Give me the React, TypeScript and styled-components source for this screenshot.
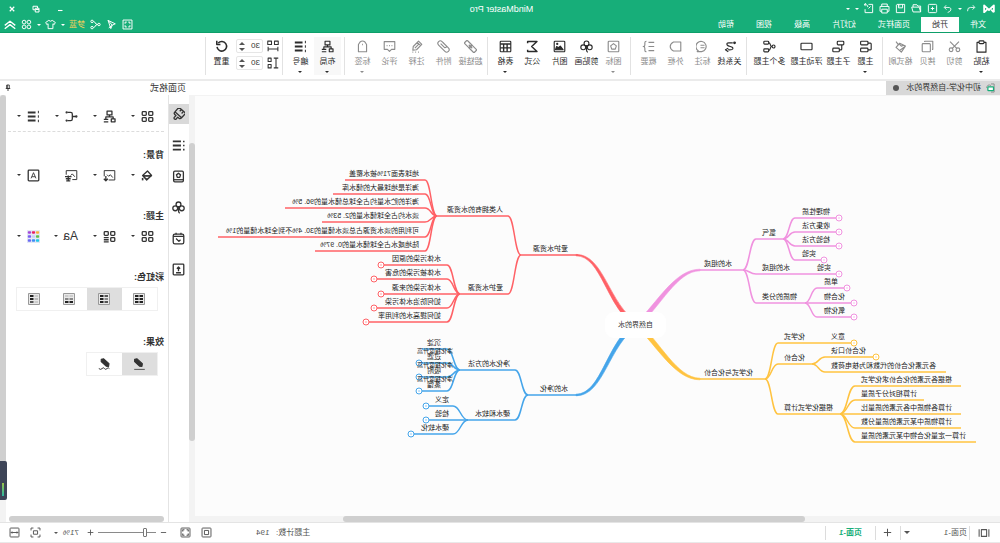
import React from "react";
import styled, { createGlobalStyle } from "styled-components";

const GREEN = "#17ae79";

const Global = createGlobalStyle`
  * { box-sizing: border-box; }
  body { margin: 0; background: #fff; overflow: hidden; }
  body, button, input, select {
    font-family: "Liberation Sans", "Noto Sans CJK SC", sans-serif;
    font-size: 8px;
    line-height: 12px;
    color: #333;
  }
  button, input, select { border: 0; padding: 0; margin: 0; background: none; }
`;

/* ---------- icons ---------- */

const club = (
  <>
    <circle cx="8" cy="4.2" r="3" />
    <circle cx="4" cy="9" r="3" />
    <circle cx="12" cy="9" r="3" />
    <path d="M8 7.5v4.5q0 2-1.5 3.200M8 8l-1-1M8 8l1-1" />
  </>
);
const fourBoxes = (
  <>
    <rect x="1.5" y="2" width="5" height="4.5" rx="1" />
    <rect x="9.5" y="2" width="5" height="4.5" rx="1" />
    <rect x="1.5" y="9.5" width="5" height="4.5" rx="1" />
    <rect x="9.5" y="9.5" width="5" height="4.5" rx="1" />
  </>
);
const numbered = (
  <>
    <path d="M5.500 3h9.500M5.500 8h9.500M5.500 13h9.500" strokeWidth="2.4" />
    <path d="M2 1v3M2 6.500v3M2 12v3" strokeWidth="1.2" />
  </>
);
const tree = (
  <>
    <rect x="5" y="1.5" width="6" height="4.5" />
    <path d="M8 6v2.5M3.5 11V8.5h9V11" />
    <rect x="1.2" y="11" width="4.6" height="3.5" />
    <path d="M9.5 11.5h5.5M9.5 14.5h5.5" />
  </>
);

const ICONS: Record<string, React.ReactNode> = {
  undo: <path d="M5 2 2 5.5 5.5 9M2.5 5.5H9q5 0 4.500 6" />,
  redo: <path d="M11 2l3 3.500L10.500 9M13.500 5.500H8q-5.500 0-4.500 4 1 3 5 4" />,
  add: <><rect x="2" y="2" width="12" height="12" rx="1.500" /><path d="M8 5.500v5M5.500 8h5" /></>,
  open: <path d="M2 13V4.500h4l1.500-2H13v3.500M2 13l2-7h11l-2 7z" />,
  save: <path d="M2 2h11l1 1v11H2zM5 2v5h6V2M9 3.500v1.500" />,
  print: <path d="M4 5V1.500h8V5M4 12H1.500V5h13v7H12M4 9h8v5.500H4z" />,
  share: <path d="M8 2H2v12h11V9M9 6c0-3 2-4 5-4M11.500 0.500 14 2l-1.500 2.500M5 5l3 3" />,
  min: <path d="M3 11h9" strokeWidth="2.200" />,
  restore: <path d="M2 6.500h7.500V14H2zM5 6V2.500h9v7h-4M2 9h7" />,
  close: <path d="M3.500 3.500l9 9M12.500 3.500l-9 9" strokeWidth="2.400" />,
  fit: <><rect x="1.500" y="1.500" width="13" height="13" /><path d="M4.500 7V4.500H7M9 4.500h2.500V7M11.500 9v2.500H9M7 11.500H4.500V9" /></>,
  send: <path d="M13 2 2.500 7 7 9l2 5zM13 2 7 9l5 4" />,
  nodes: <><circle cx="3" cy="8" r="1.800" /><circle cx="13" cy="3.500" r="1.800" /><circle cx="13" cy="12.500" r="1.800" /><path d="M5 8c4 0 3-4.500 6-4.500M5 8c4 0 3 4.500 6 4.500" /></>,
  shirt: <path d="M5.500 2 1 5l1.500 3L4.500 7v7h7V7l2 1L15 5l-4.500-3q-2.500 2.500-5 0z" />,
  apps: <><circle cx="4.500" cy="4.500" r="2.700" /><circle cx="11.500" cy="4.500" r="2.700" /><circle cx="4.500" cy="11.500" r="2.700" /><circle cx="11.500" cy="11.500" r="2.700" /></>,
  up: <path d="M1 8.500 8 3l7 5.500M1 13l7-5.500 7 5.500" />,
  paste: <><path d="M5 3H2.500v12h11V3H11" /><rect x="5" y="1" width="6" height="3.500" rx="1" /></>,
  cut: <><circle cx="3.800" cy="12" r="2.300" /><circle cx="12.200" cy="12" r="2.300" /><path d="M5 10.500 13.500 2M11 10.500 2.500 2" /></>,
  copy: <><rect x="4.500" y="4.500" width="10" height="10" rx="1" /><path d="M2.500 11.500h-1v-10h10v1" /></>,
  painter: <path d="M2 7.500 9 4l4.500 5L7 15zM10.500 6l3-4M2 7.500l7 5.500M4 6.500l3 1 3-3" />,
  topic: <><rect x="5" y="1.500" width="9" height="4.500" rx="1" /><rect x="5" y="10" width="9" height="4.500" rx="1" /><path d="M5 12.200H2q-1 0-1-1V5q0-1.200 1-1.200h3" /></>,
  subtopic: <><rect x="1.500" y="1.500" width="8" height="4.500" rx="1" /><rect x="7" y="10" width="8" height="4.500" rx="1" /><path d="M4 6v5q0 1.200 1 1.200h2" /></>,
  floating: <rect x="1.200" y="4" width="13.600" height="8" rx="1" />,
  multi: <><circle cx="3" cy="8" r="1.800" /><rect x="9" y="1.500" width="6" height="3.600" rx="1" /><rect x="9" y="11" width="6" height="3.600" rx="1" /><path d="M5 8c3 0 1-4.500 4-4.500M5 8c3 0 1 4.700 4 4.700" /></>,
  relation: <><path d="M4 3.500h5q3 0 2 2.500-1 1.500-4 2-4 1-3 3 .5 1.500 6 1" /><circle cx="1.800" cy="3.500" r="1" fill="currentColor" /><path d="M9.500 10l3.500 2-3.500 2.500" /></>,
  callout: <><path d="M13 13.500A6.300 6.300 0 1 0 9 14.300h5.500z" /><path d="M5.500 6.500h5M5.500 9.500h5" /></>,
  boundary: <path d="M1.500 2.500h9q4 2 4 5.500t-4 5.500h-9z" />,
  summary: <path d="M1 3h7M1 8h7M1 13h7M10.500 1.500q2 0 2 2v2.500q0 2 2 2-2 0-2 2v2.500q0 2-2 2" />,
  mark: <><rect x="1.500" y="1.500" width="13" height="13" rx="1" /><path d="M8 4.500l3.500 2.700-1.300 4H5.800l-1.300-4z" /></>,
  club,
  image: <><rect x="1.500" y="1.500" width="13" height="13" rx="1" /><path d="M3.500 12 7 7.500l2.500 2 2-1.500 1.500 4z" fill="currentColor" /><circle cx="10.800" cy="4.800" r=".7" /></>,
  sigma: <path d="M14 4V1.800H2.500L9 8l-6.500 6.200H14V12" strokeWidth="1.800" />,
  table: <><rect x="1.500" y="1.500" width="13" height="13" rx="1" /><path d="M1.500 5h13M1.500 9.700h13M6 5v9.500M10.300 5v9.500" strokeWidth="1.700" /></>,
  link: <g transform="rotate(-45 8 8)"><rect x="-.5" y="5.500" width="9" height="5" rx="1" /><rect x="7.500" y="5.500" width="9" height="5" rx="1" /><path d="M5 8h6" /></g>,
  clip: <g transform="rotate(-45 8 8)"><path d="M12 5H2.500a3 3 0 0 0 0 6h11a2.600 2.600 0 0 0 0-6H6q-2 1.500 0 3h7" /></g>,
  note: <path d="M4 8 10.500 1.500l4 4L8 12l-4.500.5zM9 3l4 4M3 15h1M6.500 15h1M10 15h1M6 10l4.500-4.500" transform="translate(16 0) scale(-1 1)" />,
  comment: <><path d="M1.500 2h13v9.500h-4L8 14l-2.500-2.500h-4z" /><path d="M4.500 7h1M7.500 7h1M10.500 7h1" /></>,
  tag: <><path d="M3 5.500 5 2.500q3-2.500 6 0l2 3v9H3z" /><path d="M7.500 5.500h1" strokeWidth="2" /></>,
  tree,
  numbered,
  hgap: <><rect x="1" y="1.500" width="5" height="4.500" /><rect x="10" y="1.500" width="5" height="4.500" /><path d="M1.500 9v6M14.500 9v6M1.500 12h13" /></>,
  vgap: <><rect x="10.500" y="1.500" width="4" height="4.500" /><rect x="10.500" y="10" width="4" height="4.500" /><path d="M1 1.500h6M1 14.500h6M4 1.500v13" /></>,
  reset: <path d="M13.500 8.500A5.900 5.900 0 1 1 12 3.800M13.800 1v4.500H9.300" strokeWidth="1.900" />,
  brush: <g transform="rotate(-42 8 8)"><path d="M2.500 1h11v7.500h-11zM2.500 8.500q0 2.500 2 2.500h2v3.500q1.500 2 3 0V11h2q2 0 2-2.500M6 1v3.500M9.500 1v3" /></g>,
  outline: <><path d="M5 3h10M5 8h10M5 13h10" strokeWidth="2.200" /><path d="M1.500 2v2M1.500 7v2M1.500 12v2" strokeWidth="1.800" /></>,
  book: <><rect x="2" y="1.500" width="12" height="13" rx="1.500" /><path d="M2 12h12" /><path d="M8 4l2.500 2-1 3h-3l-1-3z" /></>,
  calendar: <><rect x="1.500" y="2.500" width="13" height="12" rx="2" /><path d="M1.500 5.500h13M5 1v2M11 1v2M5.500 9.500 7.500 11.500l3.500-3.500" /></>,
  upload: <><rect x="1.500" y="1.500" width="13" height="13" rx="1" /><path d="M8 10V5.500M6 7l2-2 2 2M5 12h6" /></>,
  four: fourBoxes,
  bracket: <><path d="M2 8h5M13 3H9Q7 3 7 5v6q0 2 2 2h4" /><circle cx="2" cy="8" r=".6" /><circle cx="14" cy="3" r=".6" /><circle cx="14" cy="13" r=".6" /></>,
  fill: <><path d="M8 2.500 14 8l-5 5.500L3 8zM3.500 8.500h10L9 13z" /><path d="M3.500 8.500h10" /><path d="M14 11v3" strokeWidth="2" /></>,
  imgdown: <><path d="M9 13.500H1.500V2h13v7" strokeWidth="1.200" /><path d="M4 10.500 7 7l2 2 2-2" strokeWidth="1.200" /><path d="M12.500 8.500v6M10 12l2.500 2.500L15 12" /></>,
  imgdel: <><path d="M7 13H1.500V2h13v5" strokeWidth="1.200" /><path d="M4 9.500 7 6l2 2" strokeWidth="1.200" /><path d="M8 9.500h8M9 12h6M9.500 14.500h5M12 8v6" /></>,
  letter: <><rect x="1.500" y="1.500" width="13" height="13" rx="1" /><path d="M5 11.500 8 4.500l3 7M6 9.500h4" strokeWidth="1.100" /></>,
  mixed: <><rect x="1.500" y="2" width="5" height="4.500" rx="1" /><rect x="9.500" y="2" width="5" height="4.500" rx="1" /><rect x="1.500" y="9.500" width="5" height="4.500" rx="1" /><path d="M9 9.500h6M9 12h6M9 14.500h6" /></>,
  palette: (
    <g stroke="none">
      <rect width="16" height="16" fill="#e4e9f5" />
      {["#fbb03b", "#e91e63", "#a445d8", "#5fc04a", "#c6d0f5", "#7a5cf0", "#22c6e8", "#3f8cf5", "#6a6af4"].map((c, i) => (
        <rect key={c} x={1 + (i % 3) * 5} y={1.5 + Math.floor(i / 3) * 5} width="4" height="3" rx="1" fill={c} />
      ))}
    </g>
  ),
  pen: <><path d="M3 1.500 6 1l6.500 6-.5 3.500-3-.5L3 4.500z" fill="currentColor" transform="translate(17 0) scale(-1 1)" /><path d="M1.500 14h13" strokeWidth="1" /></>,
  sketch: <><path d="M3 1.500 6 1l6.500 6-.5 3.500-3-.5L3 4.500z" fill="currentColor" transform="translate(15 0) scale(-1 1)" /><path d="M2 13q1.500-2 3 0t3 0 3 0 4 0" strokeWidth="1.200" /></>,
  frame: <path d="M4.500 3.500h7v9h-7zM1.500 3v10M14.500 3v10" />,
  plus: <path d="M8 1.500v13M1.500 8h13" />,
  minus: <path d="M2 8h12" />,
  fitpage: <><rect x="1.500" y="1.500" width="13" height="13" rx="1" /><path d="M5 5h6v6H5z" /></>,
  full: <><rect x="1.500" y="1.500" width="13" height="13" rx="1" /><path d="M4 6.500V4h2.500M9.500 4H12v2.500M12 9.500V12H9.500M6.500 12H4V9.500" strokeWidth="1.700" /></>,
  focus: <path d="M1.500 5V1.500H5M11 1.500h3.500V5M14.500 11v3.500H11M5 14.500H1.500V11M5 5.500h6v5H5z" />,
  width: <><rect x="1.500" y="1.500" width="13" height="13" rx="1" /><path d="M3 8h10M4.500 6.500 3 8l1.500 1.500M11.500 6.500 13 8l-1.500 1.500" /></>,
  pin: <path d="M5.500 2h5v7h-5zM3.500 9h9M8 9v5M9.500 2v7" />,
};

const Svg = styled.svg`
  display: block;
  flex: none;
  fill: none;
  stroke: currentColor;
  stroke-linejoin: round;
`;

function Icon({ name, size = 13, weight = 1.4 }: { name: string; size?: number; weight?: number }) {
  return (
    <Svg viewBox="0 0 16 16" width={size} height={size} strokeWidth={weight} aria-hidden="true">
      {ICONS[name]}
    </Svg>
  );
}

const Logo = styled.svg`
  display: block;
  fill: none;
  stroke: #fff;
  stroke-width: 2.4;
  stroke-linejoin: round;
`;

const Caret = styled.span<{ $up?: boolean; $size?: number }>`
  display: block;
  flex: none;
  width: 0;
  height: 0;
  border: ${(p) => p.$size ?? 2}px solid transparent;
  border-top: ${(p) => (p.$up ? "0" : `${p.$size ?? 2}px solid currentColor`)};
  border-bottom: ${(p) => (p.$up ? `${p.$size ?? 2}px solid currentColor` : "0")};
`;

/* ---------- page frame ---------- */

/* The whole window is shown in mirror orientation. */
const Page = styled.div`
  display: flex;
  flex-direction: column;
  min-height: 100vh;
  transform: scaleX(-1);
  background: #fff;
`;

const Header = styled.header`
  color: #fff;
  background: ${GREEN};
  border-bottom: 1px solid #0d9f69;
`;

const TitleRow = styled.div`
  display: grid;
  grid-template-columns: 1fr auto 1fr;
  align-items: center;
  height: 17px;
  padding: 0 8px 0 5px;
`;

const AppTitle = styled.h1`
  margin: 0;
  font-size: 9px;
  line-height: 12px;
  font-weight: 400;
`;

const Tools = styled.div<{ $gap: number; $end?: boolean }>`
  display: flex;
  align-items: center;
  gap: ${(p) => p.$gap}px;
  justify-content: ${(p) => (p.$end ? "flex-end" : "flex-start")};
`;

const IconButton = styled.button`
  display: flex;
  align-items: center;
  justify-content: center;
  gap: 4px;
  color: inherit;
`;

const MenuRow = styled.div`
  display: flex;
  justify-content: space-between;
  align-items: stretch;
  height: 15px;
  padding: 0 4px 0 3px;
`;

const MenuTabs = styled.nav`
  display: flex;
`;

const MenuTab = styled.button<{ $active?: boolean }>`
  height: 15px;
  padding: 0 11px;
  color: ${(p) => (p.$active ? "#333" : "#fff")};
  background: ${(p) => (p.$active ? "#fff" : "transparent")};
`;

const UserName = styled.span`
  color: #f3cf5b;
`;

/* ---------- ribbon ---------- */

const Ribbon = styled.div`
  display: flex;
  height: 48px;
  padding: 4px 0 4px 2px;
  border-bottom: 2px solid #ebebeb;
`;

const Group = styled.div`
  display: flex;
  padding: 0 4px 0 3px;
  border-right: 1px solid #e2e2e2;
`;

const RibbonItem = styled.button<{ $wide?: boolean; $dim?: boolean; $active?: boolean }>`
  display: flex;
  flex-direction: column;
  align-items: center;
  gap: 4px;
  width: ${(p) => (p.$wide ? 37 : 27)}px;
  padding-top: 3px;
  white-space: nowrap;
  color: ${(p) => (p.$dim ? "#8c8c8c" : "#2b2b2b")};
  background: ${(p) => (p.$active ? "#f8f8f8" : "transparent")};
`;

const ItemLabel = styled.span`
  line-height: 10px;
`;

const Stepper = styled.label`
  display: flex;
  align-items: center;
  gap: 4px;
`;

const StepBox = styled.span`
  display: flex;
  align-items: center;
  justify-content: space-between;
  width: 27px;
  height: 14px;
  padding: 0 2px;
  border: 1px solid #e6e6e6;
  border-radius: 2px;
`;

const StepInput = styled.input`
  width: 14px;
  font-size: 8px;
`;

const StepArrows = styled.span`
  display: flex;
  flex-direction: column;
  gap: 3px;
  color: #555;
`;

type Item = { icon: string; label: string; dim?: boolean; wide?: boolean; menu?: boolean; active?: boolean };

const RIBBON: Item[][] = [
  [
    { icon: "paste", label: "粘贴", menu: true },
    { icon: "cut", label: "剪切", dim: true },
    { icon: "copy", label: "拷贝", dim: true },
    { icon: "painter", label: "格式刷", dim: true },
  ],
  [
    { icon: "topic", label: "主题", menu: true },
    { icon: "subtopic", label: "子主题" },
    { icon: "floating", label: "浮动主题", wide: true },
    { icon: "multi", label: "多个主题", wide: true },
  ],
  [
    { icon: "relation", label: "关系线" },
    { icon: "callout", label: "标注", dim: true },
    { icon: "boundary", label: "外框", dim: true },
    { icon: "summary", label: "概要", dim: true },
  ],
  [
    { icon: "mark", label: "图标", dim: true, menu: true },
    { icon: "club", label: "剪贴画" },
    { icon: "image", label: "图片" },
    { icon: "sigma", label: "公式" },
    { icon: "table", label: "表格", menu: true },
  ],
  [
    { icon: "link", label: "超链接", dim: true },
    { icon: "clip", label: "附件", dim: true },
    { icon: "note", label: "注释", dim: true },
    { icon: "comment", label: "评论", dim: true },
    { icon: "tag", label: "标签", dim: true, menu: true },
  ],
  [
    { icon: "tree", label: "布局", menu: true, active: true },
    { icon: "numbered", label: "编号", menu: true },
  ],
];

function RibbonButton({ item }: { item: Item }) {
  return (
    <RibbonItem $wide={item.wide} $dim={item.dim} $active={item.active}>
      <Icon name={item.icon} />
      <ItemLabel>{item.label}</ItemLabel>
      {item.menu && <Caret />}
    </RibbonItem>
  );
}

function SpacingField({ icon, label }: { icon: string; label: string }) {
  return (
    <Stepper>
      <Icon name={icon} size={12} />
      <StepBox>
        <StepInput defaultValue="30" aria-label={label} />
        <StepArrows>
          <Caret $up $size={3} />
          <Caret $size={3} />
        </StepArrows>
      </StepBox>
    </Stepper>
  );
}

const SpacingGroup = styled(Group)`
  padding: 0 2px 0 3px;
`;

const SpacingColumn = styled.div`
  display: flex;
  flex-direction: column;
  gap: 3px;
  padding: 2px 1px 0 0;
`;

/* ---------- workspace ---------- */

const Workspace = styled.main`
  flex: 1;
  display: flex;
  min-height: 0;
`;

const Editor = styled.section`
  flex: 1;
  display: flex;
  flex-direction: column;
  min-width: 0;
`;

const DocTabs = styled.div`
  display: flex;
  height: 14px;
`;

const DocTab = styled.button`
  display: flex;
  align-items: center;
  gap: 5px;
  padding: 0 7px 0 4px;
  background: #d8d8d8;
`;

const Dot = styled.span`
  width: 6px;
  height: 6px;
  margin-left: 2px;
  border-radius: 50%;
  background: #555;
`;

const CanvasRow = styled.div`
  flex: 1;
  display: flex;
`;

const Canvas = styled.div`
  flex: 1;
  position: relative;
  overflow: hidden;
  min-height: 420px;
  background: #fcfcfc;
  border-top: 1px solid #f3f3f3;
`;

const VTrack = styled.div<{ $top: number }>`
  flex: none;
  width: 6px;
  padding-top: ${(p) => p.$top}px;
  background: #f3f3f3;
`;

const VThumb = styled.div<{ $share: number }>`
  height: ${(p) => p.$share}%;
  border-radius: 3px;
  background: #cfcfcf;
`;

const HTrack = styled.div`
  height: 6px;
  padding: 0 19% 0 24%;
  background: #f3f3f3;
`;

const HThumb = styled.div`
  height: 6px;
  border-radius: 3px;
  background: #cfcfcf;
`;

/* ---------- mind map ---------- */

type Leaf = { text: string; y: number; end: number; badge?: boolean; over?: string };
type Branch = { text: string; y: number; start: number; end: number; textX: number; leafStart: number; leafText: number; leaves: Leaf[]; badge?: boolean; extra?: string; extraX?: number };
type Limb = { text: string; color: string; y: number; start: number; end: number; textX: number; trunk: string; left?: boolean; branches: Branch[] };

const LIMBS: Limb[] = [
  {
    text: "爱护水资源", color: "#ff6166", y: 159, start: 422, end: 479, textX: 432,
    trunk: "M363 226C391 209 396 158 424 158.400L424 159.800C398 160 394 212 363 232z",
    branches: [
      {
        text: "人类拥有的水资源", y: 120, start: 492, end: 563, textX: 497, leafStart: 575, leafText: 581,
        leaves: [
          { text: "地球表面71%被水覆盖", y: 84, end: 655 },
          { text: "海洋是地球最大的储水库", y: 98, end: 667 },
          { text: "海洋的贮水量约占全球总储水量的96. 5%", y: 112, end: 715 },
          { text: "淡水约占全球储水量的2. 53%", y: 126, end: 678 },
          { text: "可利用的淡水资源占总淡水储量的30. 4%不到全球水储量的1%", y: 141, end: 782 },
          { text: "陆地咸水占全球储水量的0. 97%", y: 155, end: 685 },
        ],
      },
      {
        text: "爱护水资源", y: 198, start: 492, end: 540, textX: 497, leafStart: 553, leafText: 559,
        leaves: [
          { text: "水体污染的原因", y: 169, end: 619, badge: true },
          { text: "水体被污染的危害", y: 183, end: 626, badge: true },
          { text: "水体污染的来源", y: 198, end: 619, badge: true },
          { text: "如何防治水体污染", y: 212, end: 626, badge: true },
          { text: "如何提高水的利用率", y: 226, end: 634, badge: true },
        ],
      },
    ],
  },
  {
    text: "水的净化", color: "#45a5ea", y: 299, start: 422, end: 472, textX: 432,
    trunk: "M363 231C391 248 396 300 424 299.800L424 298.200C398 298 394 245 363 225z",
    branches: [
      {
        text: "净化水的方法", y: 274, start: 485, end: 540, textX: 490, leafStart: 553, leafText: 559,
        leaves: [
          { text: "沉淀", y: 253, end: 578, over: "净化程度升高" },
          { text: "过滤", y: 267, end: 581, badge: true, over: "净化程度升高" },
          { text: "吸附", y: 281, end: 581, badge: true, over: "净化程度升高" },
          { text: "蒸馏", y: 295, end: 581, badge: true },
        ],
      },
      {
        text: "硬水和软水", y: 324, start: 485, end: 532, textX: 490, leafStart: 547, leafText: 551,
        leaves: [
          { text: "定义", y: 310, end: 574, badge: true },
          { text: "检验", y: 324, end: 574, badge: true },
          { text: "硬水软化", y: 338, end: 589, badge: true },
        ],
      },
    ],
  },
  {
    text: "水的组成", color: "#f092df", y: 174, start: 300, end: 257, textX: 296, left: true,
    trunk: "M363 226C343 207 325 173 300 173.200L300 174.800C323 175 339 210 363 232z",
    branches: [
      {
        text: "氢气", y: 143, start: 244, end: 217, textX: 238, leafStart: 205, leafText: 198,
        leaves: [
          { text: "物理性质", y: 122, end: 161, badge: true },
          { text: "收集方法", y: 136, end: 161, badge: true },
          { text: "检验方法", y: 150, end: 161, badge: true },
          { text: "实验", y: 164, end: 176, badge: true },
        ],
      },
      { text: "水的组成", y: 178, start: 244, end: 161, textX: 238, leafStart: 0, leafText: 0, leaves: [], badge: true, extra: "实验", extraX: 183 },
      {
        text: "物质的分类", y: 207, start: 244, end: 195, textX: 238, leafStart: 183, leafText: 176,
        leaves: [
          { text: "单质", y: 192, end: 153, badge: true },
          { text: "化合物", y: 207, end: 146, badge: true },
          { text: "氧化物", y: 221, end: 146, badge: true },
        ],
      },
    ],
  },
  {
    text: "化学式与化合价", color: "#ffc340", y: 283, start: 300, end: 235, textX: 296, left: true,
    trunk: "M363 231C343 250 325 284 300 283.800L300 282.200C323 282 339 247 363 225z",
    branches: [
      { text: "化学式", y: 247, start: 222, end: 146, textX: 216, leafStart: 0, leafText: 0, leaves: [], badge: true, extra: "意义", extraX: 169 },
      {
        text: "化合价", y: 268, start: 222, end: 188, textX: 216, leafStart: 175, leafText: 169,
        leaves: [
          { text: "化合价口诀", y: 261, end: 124, badge: true },
          { text: "各元素化合价的代数和为核电荷数", y: 276, end: 54 },
        ],
      },
      {
        text: "根据化学式计算", y: 318, start: 222, end: 160, textX: 216, leafStart: 145, leafText: 139,
        leaves: [
          { text: "根据各元素的化合价求化学式", y: 290, end: 39 },
          { text: "计算相对分子质量", y: 304, end: 76 },
          { text: "计算各物质中各元素的质量比", y: 318, end: 39 },
          { text: "计算物质中某元素的质量分数", y: 332, end: 39 },
          { text: "计算一定量化合物中某元素的质量", y: 346, end: 24 },
        ],
      },
    ],
  },
];

const STAGE_WIDTH = 800;

const Stage = styled.div`
  position: absolute;
  top: 0;
  left: 0;
  width: ${STAGE_WIDTH}px;
`;

const Lines = styled.svg`
  display: block;
  fill: none;
  stroke-width: 1.5;
  overflow: visible;
`;

const Topic = styled.span<{ $x: number; $y: number; $left?: boolean; $small?: boolean }>`
  position: absolute;
  top: ${(p) => p.$y - 11}px;
  ${(p) => (p.$left ? `right: ${STAGE_WIDTH - p.$x}px;` : `left: ${p.$x}px;`)}
  font-size: ${(p) => (p.$small ? 6 : 7)}px;
  line-height: 10px;
  white-space: nowrap;
  color: #222;
`;

const Root = styled.div`
  position: absolute;
  left: 334px;
  top: 216px;
  width: 61px;
  height: 26px;
  border-radius: 9px;
  background: #fff;
  font-size: 7px;
  line-height: 26px;
  text-align: center;
`;

const bend = (x1: number, y1: number, x2: number, y2: number, x3: number) => {
  const m = (x1 + x2) / 2;
  return `M${x1} ${y1}C${m} ${y1} ${m} ${y2} ${x2} ${y2}H${x3}`;
};

function Stroke({ fromX, fromY, startX, y, end, badge, left }: { fromX: number; fromY: number; startX: number; y: number; end: number; badge?: boolean; left?: boolean }) {
  const stop = badge ? end + (left ? 3 : -3) : end;
  return (
    <>
      <path d={bend(fromX, fromY, startX, y, stop)} />
      {badge && (
        <g strokeWidth="1">
          <circle cx={end} cy={y} r="3" fill="#fff" />
          <path d={`M${end} ${y - 1}v2`} opacity=".6" />
        </g>
      )}
    </>
  );
}

function MindMap() {
  return (
    <Stage>
      <Lines width={STAGE_WIDTH} height={410}>
        {LIMBS.map((l) => (
          <g key={l.text} stroke={l.color}>
            <path d={l.trunk} fill={l.color} strokeWidth=".6" />
            <path d={`M${l.start} ${l.y}H${l.end}`} />
            {l.branches.map((b) => (
              <g key={b.text}>
                <Stroke fromX={l.end} fromY={l.y} startX={b.start} y={b.y} end={b.end} badge={b.badge} left={l.left} />
                {b.leaves.map((f) => (
                  <Stroke key={f.text} fromX={b.end} fromY={b.y} startX={b.leafStart} y={f.y} end={f.end} badge={f.badge} left={l.left} />
                ))}
              </g>
            ))}
          </g>
        ))}
      </Lines>
      {LIMBS.map((l) => (
        <React.Fragment key={l.text}>
          <Topic $x={l.textX} $y={l.y} $left={l.left}>{l.text}</Topic>
          {l.branches.map((b) => (
            <React.Fragment key={b.text}>
              <Topic $x={b.textX} $y={b.y} $left={l.left}>{b.text}</Topic>
              {b.extra && <Topic $x={b.extraX ?? 0} $y={b.y} $left={l.left}>{b.extra}</Topic>}
              {b.leaves.map((f) => (
                <React.Fragment key={f.text}>
                  <Topic $x={b.leafText} $y={f.y} $left={l.left}>{f.text}</Topic>
                  {f.over && <Topic $small $x={547} $y={f.y + 8}>{f.over}</Topic>}
                </React.Fragment>
              ))}
            </React.Fragment>
          ))}
        </React.Fragment>
      ))}
      <Root>自然界的水</Root>
    </Stage>
  );
}

/* ---------- side panel ---------- */

const Side = styled.aside`
  display: flex;
  flex-direction: column;
  width: 189px;
  flex: none;
`;

const SideTitle = styled.h2`
  display: flex;
  justify-content: space-between;
  align-items: center;
  height: 14px;
  margin: 0;
  padding: 0 4px 0 3px;
  font-size: 9px;
  line-height: 12px;
  font-weight: 400;
`;

const SideBody = styled.div`
  position: relative;
  flex: 1;
  display: flex;
`;

const Strip = styled.div`
  display: flex;
  flex-direction: column;
  gap: 11px;
  width: 21px;
  padding: 9px 1px 0 0;
  border-right: 1px solid #e4e4e4;
`;

const StripButton = styled.button<{ $active?: boolean }>`
  display: flex;
  align-items: center;
  justify-content: center;
  width: 20px;
  height: 20px;
  background: ${(p) => (p.$active ? "#d9d9d9" : "transparent")};
`;

const PanelColumn = styled.div`
  flex: 1;
  min-width: 0;
  display: flex;
  flex-direction: column;
  justify-content: space-between;
`;

const Panel = styled.div`
  padding: 11px 0 0 3px;
`;

const ChoiceRow = styled.div`
  display: grid;
  grid-template-columns: repeat(3, 38px) 1fr;
  height: 20px;
  padding-left: 11px;
`;

const Choice = styled.button`
  display: flex;
  align-items: center;
  gap: 6px;
`;

const FontGlyph = styled.span`
  width: 14px;
  font-size: 12px;
  line-height: 16px;
`;

const Divider = styled.hr`
  margin: 5px 2px 0 1px;
  border: 0;
  border-top: 1px dashed #dcdcdc;
`;

const SectionTitle = styled.h3<{ $tight?: boolean }>`
  margin: ${(p) => (p.$tight ? "17px 0 4px 1px" : "25px 0 4px 1px")};
  font-size: 9px;
  line-height: 12px;
  font-weight: 700;
`;

const Segments = styled.div`
  display: inline-flex;
  margin-left: 7px;
  border: 1px solid #f0f0f0;
`;

const Segment = styled.button<{ $active?: boolean }>`
  display: flex;
  align-items: center;
  justify-content: center;
  width: 35px;
  height: 22px;
  background: ${(p) => (p.$active ? "#dedede" : "#fff")};
`;

const HBar = styled.div`
  height: 6px;
  margin: 0 3px 0 4px;
  border-radius: 3px;
  background: #cfcfcf;
`;

const Meter = styled.div`
  position: absolute;
  right: 0;
  bottom: 22px;
  width: 7px;
  height: 39px;
  padding: 22px 2px 4px 3px;
  border-radius: 2px 0 0 2px;
  background: #3d4457;
`;

const MeterFill = styled.div`
  height: 13px;
  background: linear-gradient(#9bc34a, #2cb7a0);
`;

const SWATCHES = [
  ["#222", "#222", "#222", "#222", "#222", "#222"],
  ["#555", "#222", "#888", "#222", "#555", "#222"],
  ["#ccc", "#ccc", "#888", "#888", "#222", "#222"],
  ["#ccc", "#222", "#bbb", "#222", "#ccc", "#555"],
];

function Swatch({ tones }: { tones: string[] }) {
  return (
    <Svg viewBox="0 0 12 12" width={12} height={12}>
      <rect x=".5" y=".5" width="11" height="11" fill="#e9e9e9" stroke="#999" />
      {tones.map((t, i) => (
        <rect key={i} x={i % 2 ? 6.5 : 2} y={2 + Math.floor(i / 2) * 3} width="3.5" height="2" fill={t} stroke="none" />
      ))}
    </Svg>
  );
}

function Choices({ icons, noCaret }: { icons: string[]; noCaret?: string }) {
  return (
    <ChoiceRow>
      {icons.map((n, i) => (
        <Choice key={i} aria-label={n}>
          {n === "font" ? <FontGlyph>Aa</FontGlyph> : <Icon name={n} size={13} weight={1.6} />}
          {n !== noCaret && <Caret />}
        </Choice>
      ))}
    </ChoiceRow>
  );
}

/* ---------- status bar ---------- */

const Status = styled.footer`
  display: flex;
  align-items: center;
  justify-content: space-between;
  height: 21px;
  padding: 0 9px 0 10px;
  border-top: 1px solid #e4e4e4;
  border-bottom: 1px solid #e9e9e9;
  color: #555;
`;

const Pages = styled.div`
  display: flex;
  align-items: center;
`;

const Cell = styled.div<{ $w: number }>`
  display: flex;
  align-items: center;
  justify-content: center;
  width: ${(p) => p.$w}px;
  height: 14px;
  border-right: 1px solid #dcdcdc;
`;

const FrameCell = styled(Cell)`
  justify-content: flex-start;
`;

const PagePicker = styled.label`
  display: flex;
  align-items: center;
  justify-content: space-between;
  width: 69px;
  height: 14px;
  padding: 0 3px 0 2px;
  border-right: 1px solid #dcdcdc;
`;

const PageSelect = styled.select`
  width: 50px;
  appearance: none;
  color: #555;
`;

const PageTab = styled.button`
  color: ${GREEN};
  font-weight: 700;
`;

const ViewTools = styled.div`
  display: flex;
  align-items: center;
  gap: 10px;
`;

const TopicCount = styled.span`
  margin-right: 34px;
  white-space: pre;
`;

const ZoomGroup = styled.div`
  display: flex;
  align-items: center;
  gap: 4px;
  margin: 0 3px;
`;

const ZoomRange = styled.input`
  width: 58px;
  height: 12px;
  appearance: none;
  background: linear-gradient(#8a8a8a, #8a8a8a) center / 100% 1px no-repeat;
  &::-webkit-slider-thumb {
    appearance: none;
    width: 4px;
    height: 9px;
    border: 1px solid #777;
    border-radius: 1px;
    background: #fff;
  }
`;

const ZoomValue = styled.button`
  display: flex;
  align-items: center;
  gap: 5px;
  margin-left: 4px;
  color: #555;
`;

export default function App() {
  return (
    <>
      <Global />
      <Page>
        <Header>
          <TitleRow>
            <Tools $gap={7}>
              <Logo viewBox="0 0 16 12" width={12} height={9} aria-hidden="true">
                <path d="M1.500 11V1.800L8 8l6.500-6.200V11L9.500 6.500M1.500 11 5 7.500" />
              </Logo>
              <Tools $gap={5}>
                <IconButton aria-label="撤销"><Icon name="undo" size={10} /><Caret /></IconButton>
                <IconButton aria-label="恢复"><Icon name="redo" size={10} /></IconButton>
                <IconButton aria-label="新建"><Icon name="add" size={11} /></IconButton>
                <IconButton aria-label="打开"><Icon name="open" size={11} /></IconButton>
                <IconButton aria-label="保存"><Icon name="save" size={11} /></IconButton>
                <IconButton aria-label="打印"><Icon name="print" size={11} /></IconButton>
                <IconButton aria-label="导出"><Icon name="share" size={11} /><Caret /></IconButton>
                <IconButton aria-label="更多"><Caret /></IconButton>
              </Tools>
            </Tools>
            <AppTitle>MindMaster Pro</AppTitle>
            <Tools $gap={16} $end>
              <IconButton aria-label="最小化"><Icon name="min" size={8} /></IconButton>
              <IconButton aria-label="还原"><Icon name="restore" size={8} weight={2} /></IconButton>
              <IconButton aria-label="关闭"><Icon name="close" size={8} /></IconButton>
            </Tools>
          </TitleRow>
          <MenuRow>
            <MenuTabs>
              <MenuTab>文件</MenuTab>
              <MenuTab $active>开始</MenuTab>
              <MenuTab>页面样式</MenuTab>
              <MenuTab>幻灯片</MenuTab>
              <MenuTab>高级</MenuTab>
              <MenuTab>视图</MenuTab>
              <MenuTab>帮助</MenuTab>
            </MenuTabs>
            <Tools $gap={5}>
              <IconButton aria-label="全屏"><Icon name="fit" size={11} /></IconButton>
              <IconButton aria-label="发送"><Icon name="send" size={11} /></IconButton>
              <IconButton aria-label="分享"><Icon name="nodes" size={11} /></IconButton>
              <IconButton><UserName>梦蓝</UserName><Caret /></IconButton>
              <IconButton aria-label="皮肤"><Icon name="shirt" size={11} /><Caret /></IconButton>
              <IconButton aria-label="应用"><Icon name="apps" size={11} /></IconButton>
              <IconButton aria-label="收起"><Icon name="up" size={12} weight={1.8} /></IconButton>
            </Tools>
          </MenuRow>
        </Header>

        <Ribbon>
          {RIBBON.map((g, i) => (
            <Group key={i}>
              {g.map((it) => <RibbonButton key={it.label} item={it} />)}
            </Group>
          ))}
          <SpacingGroup>
            <SpacingColumn>
              <SpacingField icon="hgap" label="水平间距" />
              <SpacingField icon="vgap" label="垂直间距" />
            </SpacingColumn>
            <RibbonButton item={{ icon: "reset", label: "重置" }} />
          </SpacingGroup>
        </Ribbon>

        <Workspace>
          <Editor>
            <DocTabs>
              <DocTab>
                <Svg viewBox="0 0 16 16" width={10} height={10} strokeWidth={1.4} aria-hidden="true">
                  <path d="M8 1.500H3v13h5M8 4q6-3 7 4" stroke="#888" />
                  <rect x="4" y="6" width="9" height="6" rx="1" fill="#fff" stroke={GREEN} strokeWidth="2" />
                </Svg>
                初中化学-自然界的水
                <Dot />
              </DocTab>
            </DocTabs>
            <CanvasRow>
              <Canvas><MindMap /></Canvas>
              <VTrack $top={48}><VThumb $share={80} /></VTrack>
            </CanvasRow>
            <HTrack><HThumb /></HTrack>
          </Editor>

          <Side>
            <SideTitle>页面格式<Icon name="pin" size={8} weight={1.8} /></SideTitle>
            <SideBody>
              <Strip>
                {["brush", "outline", "book", "club", "calendar", "upload"].map((n, i) => (
                  <StripButton key={n} $active={i === 0} aria-label={n}><Icon name={n} weight={1.6} /></StripButton>
                ))}
              </Strip>
              <PanelColumn>
                <Panel>
                  <Choices icons={["four", "tree", "bracket", "numbered"]} />
                  <Divider />
                  <SectionTitle $tight>背景:</SectionTitle>
                  <Choices icons={["fill", "imgdown", "imgdel", "letter"]} noCaret="imgdel" />
                  <SectionTitle>主题:</SectionTitle>
                  <Choices icons={["four", "mixed", "font", "palette"]} />
                  <SectionTitle>彩虹色:</SectionTitle>
                  <Segments>
                    {SWATCHES.map((s, i) => (
                      <Segment key={i} $active={i === 1} aria-label={`彩虹色 ${i + 1}`}><Swatch tones={s} /></Segment>
                    ))}
                  </Segments>
                  <SectionTitle>效果:</SectionTitle>
                  <Segments>
                    <Segment $active aria-label="普通"><Icon name="pen" /></Segment>
                    <Segment aria-label="手绘"><Icon name="sketch" /></Segment>
                  </Segments>
                </Panel>
                <HBar />
              </PanelColumn>
              <VTrack $top={0}><VThumb $share={92} /></VTrack>
              <Meter><MeterFill /></Meter>
            </SideBody>
          </Side>
        </Workspace>

        <Status>
          <Pages>
            <FrameCell $w={21}><IconButton aria-label="页面列表"><Icon name="frame" size={12} /></IconButton></FrameCell>
            <PagePicker>
              <PageSelect aria-label="页面"><option>页面-1</option></PageSelect>
              <Caret $size={3} />
            </PagePicker>
            <Cell $w={25}><IconButton aria-label="添加页面"><Icon name="plus" size={9} weight={1.8} /></IconButton></Cell>
            <Cell $w={50}><PageTab>页面-1</PageTab></Cell>
          </Pages>
          <ViewTools>
            <TopicCount>主题计数:   194</TopicCount>
            <IconButton aria-label="适合页面"><Icon name="fitpage" size={11} /></IconButton>
            <IconButton aria-label="全屏"><Icon name="full" size={11} /></IconButton>
            <ZoomGroup>
              <IconButton aria-label="缩小"><Icon name="minus" size={7} weight={2} /></IconButton>
              <ZoomRange type="range" min={0} max={100} defaultValue={17} aria-label="缩放" />
              <IconButton aria-label="放大"><Icon name="plus" size={7} weight={2} /></IconButton>
              <ZoomValue>71%<Caret /></ZoomValue>
            </ZoomGroup>
            <IconButton aria-label="聚焦"><Icon name="focus" size={11} /></IconButton>
            <IconButton aria-label="适合宽度"><Icon name="width" size={11} /></IconButton>
          </ViewTools>
        </Status>
      </Page>
    </>
  );
}
